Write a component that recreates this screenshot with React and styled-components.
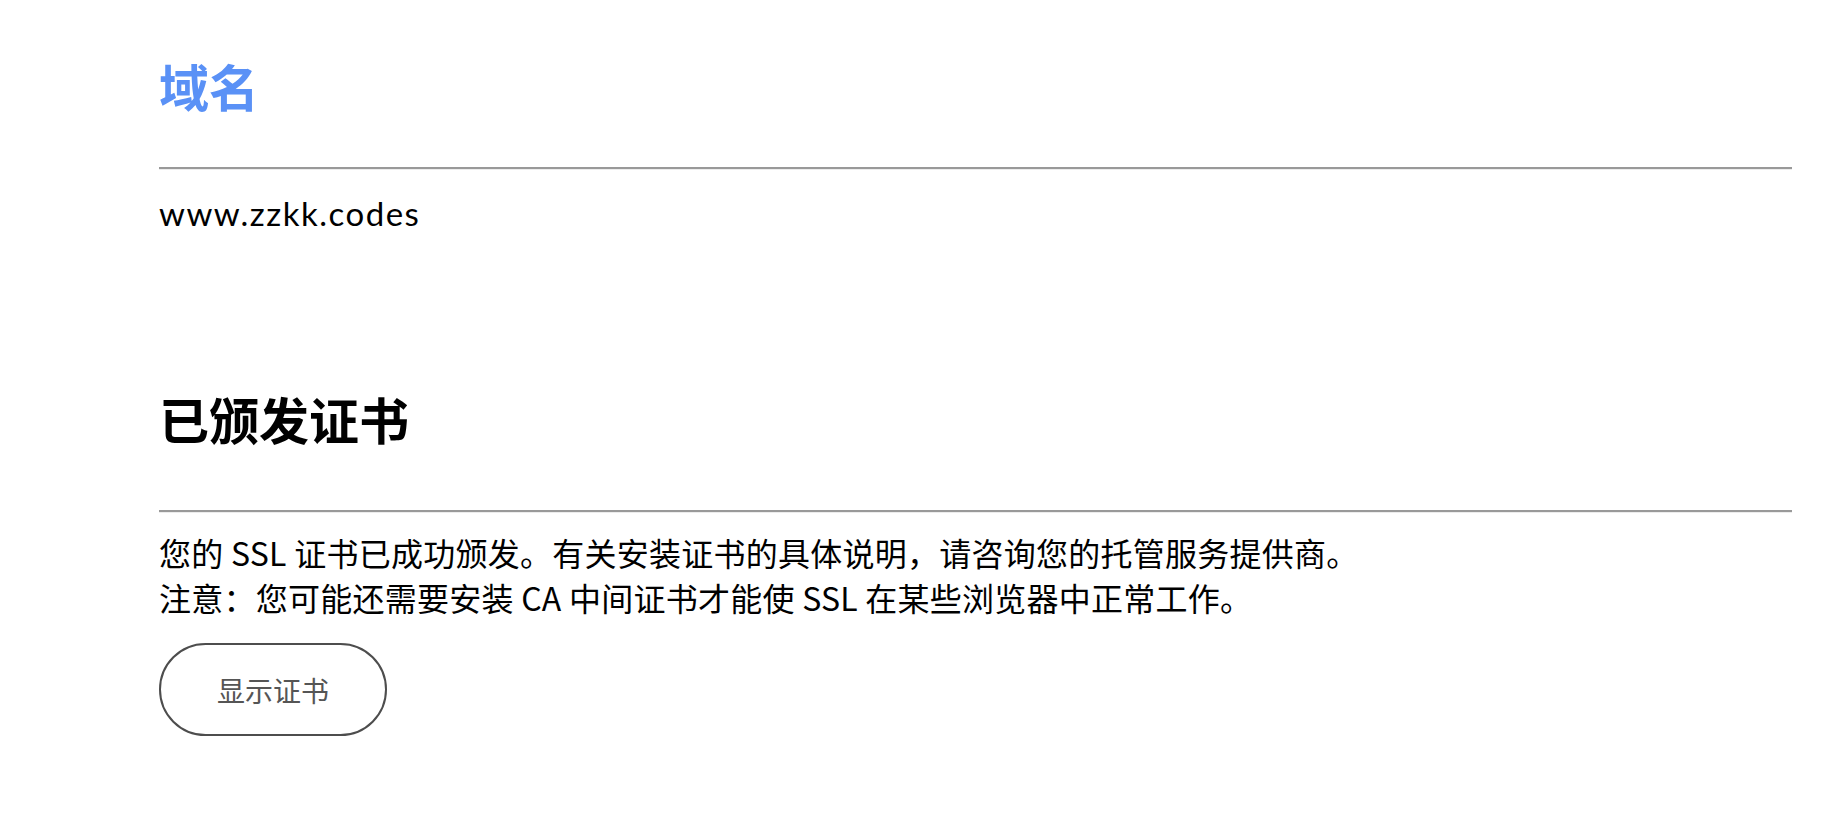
import React from 'react';
import styled, { createGlobalStyle } from 'styled-components';

const GlobalStyle = createGlobalStyle`
	html, body {
		margin: 0;
		padding: 0;
		background: #ffffff;
	}
	body {
		font-family: 'Noto Sans CJK SC', 'Noto Sans', sans-serif;
		color: #111111;
	}
`;

const Page = styled.div`
	padding: 60px 34px 0 159px;
`;

const Section = styled.section`
	display: flex;
	flex-direction: column;
	margin-bottom: ${({ gap }) => gap || 0}px;
`;

const Title = styled.h2`
	margin: 0;
	font-size: 50px;
	line-height: 50px;
	font-weight: 700;
	color: ${({ accent }) => (accent ? '#5a91f6' : '#000000')};
`;

const Rule = styled.hr`
	margin: ${({ top }) => top}px 0 0;
	height: 0;
	border: none;
	border-top: 2px solid #999999;
	border-bottom: 1px solid #ececec;
`;

const Domain = styled.div`
	margin-top: 26px;
	font-family: 'Lato', 'Noto Sans', sans-serif;
	font-size: 33px;
	line-height: 34px;
	letter-spacing: 1.5px;
	color: #000000;
`;

const Body = styled.p`
	margin: 17px 0 0;
	font-size: 32px;
	line-height: 45px;
	letter-spacing: 0.25px;
	color: #000000;
`;

const Button = styled.button`
	align-self: flex-start;
	margin-top: 23px;
	width: 228px;
	height: 93px;
	border: 2px solid #4d4d4d;
	border-radius: 47px;
	background: #ffffff;
	font-family: 'Noto Sans CJK SC', sans-serif;
	font-size: 28px;
	color: #555555;
	cursor: pointer;
`;

export default function App() {
	return (
		<>
			<GlobalStyle />
			<Page>
				<Section gap={163}>
					<Title accent>域名</Title>
					<Rule top={57} />
					<Domain>www.zzkk.codes</Domain>
				</Section>
				<Section>
					<Title>已颁发证书</Title>
					<Rule top={67} />
					<Body>
						您的 SSL 证书已成功颁发。有关安装证书的具体说明，请咨询您的托管服务提供商。
						<br />
						注意：您可能还需要安装 CA 中间证书才能使 SSL 在某些浏览器中正常工作。
					</Body>
					<Button>显示证书</Button>
				</Section>
			</Page>
		</>
	);
}
